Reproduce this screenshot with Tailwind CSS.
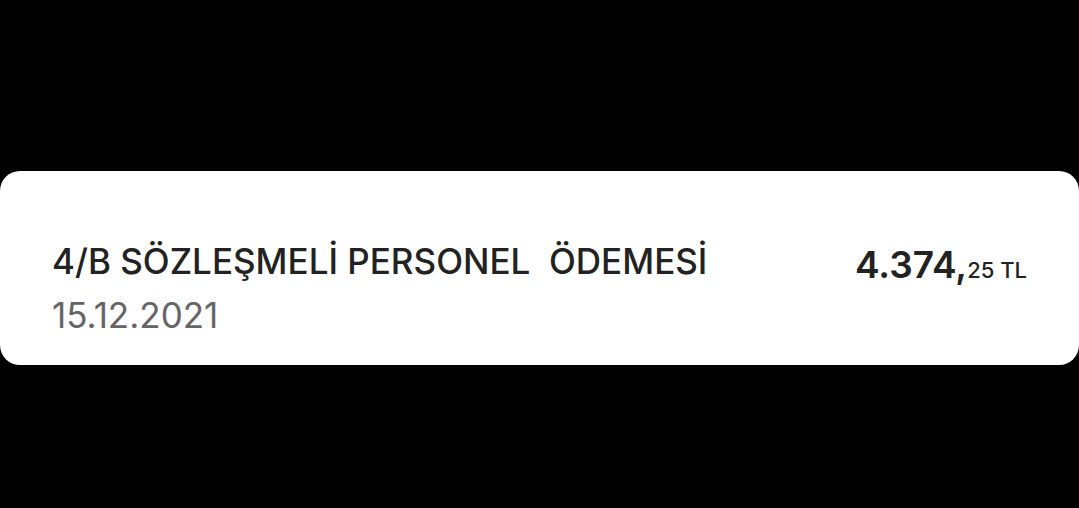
<!DOCTYPE html>
<html lang="tr">
<head>
    <meta charset="UTF-8">
    <meta name="viewport" content="width=device-width, initial-scale=1.0">
    <title>Hesap Hareketi</title>
    <script src="https://cdn.jsdelivr.net/npm/@tailwindcss/browser@4"></script>
</head>
<body class="min-h-screen bg-black pt-[171px] font-['Inter',sans-serif]">
    <!-- Transaction card -->
    <main class="flex items-start justify-between rounded-[20px] bg-white pt-[68px] pr-[52px] pb-[28px] pl-[52px]">
        <div>
            <h1 class="whitespace-pre text-[35px] leading-[44px] font-medium text-[#222222]">4/B SÖZLEŞMELİ PERSONEL  ÖDEMESİ</h1>
            <time datetime="2021-12-15" class="mt-[10px] block text-[35px] leading-[44px] text-[#666468]">15.12.2021</time>
        </div>
        <p class="whitespace-nowrap leading-[52px] text-[#222222]">
            <span class="text-[37px] font-semibold">4.374,</span><span class="text-[22px] font-medium">25 TL</span>
        </p>
    </main>
</body>
</html>
